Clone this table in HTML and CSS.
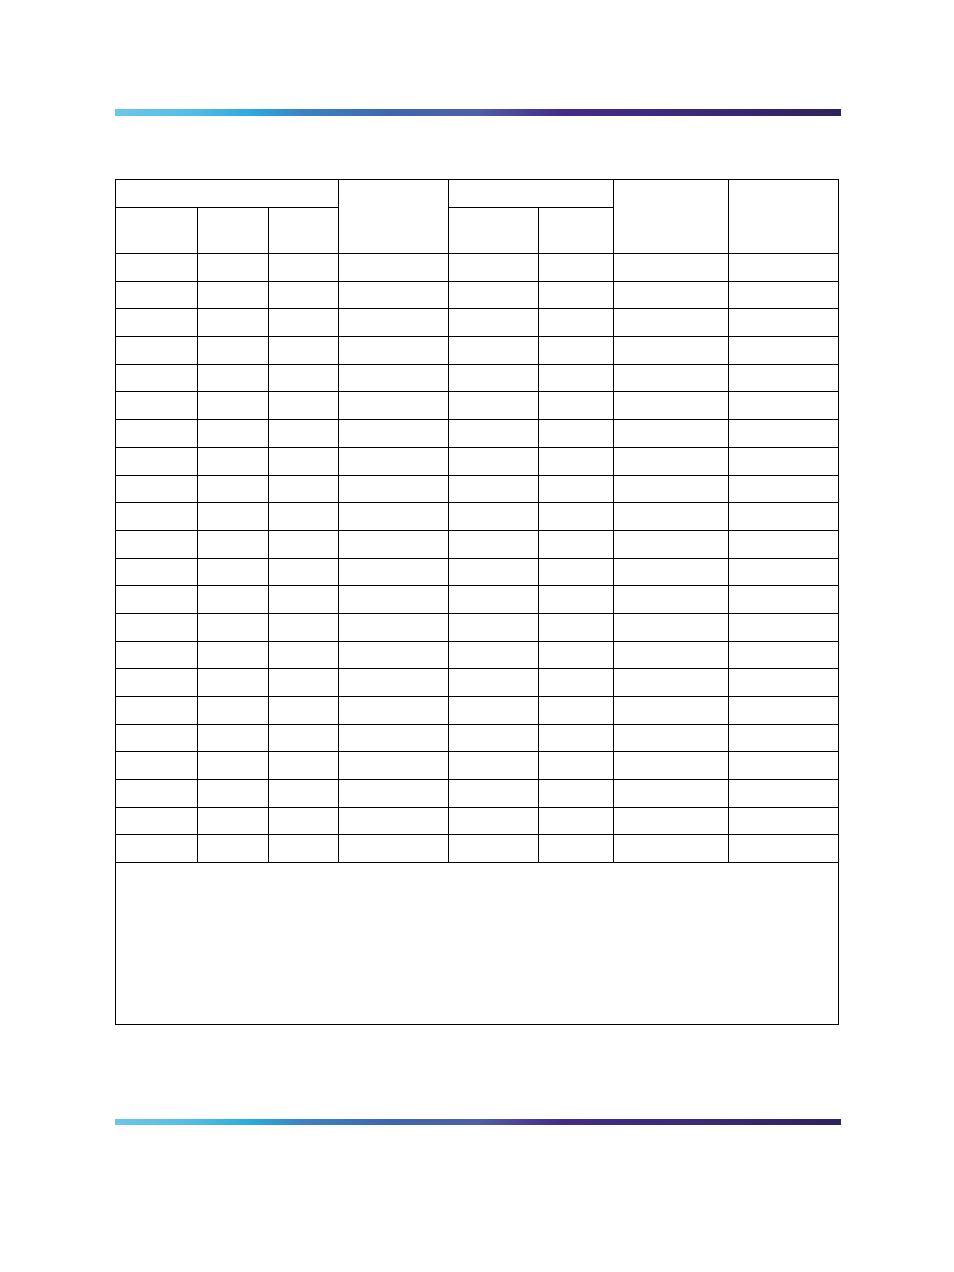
FILE: index.html
```html
<!DOCTYPE html>
<html>
<head>
<meta charset="utf-8">
<link rel="stylesheet" href="styles.css">
</head>
<body>
<div class="page">
  <div class="bar bar-top"></div>
  <table class="grid">
    <colgroup>
      <col class="c1"><col class="c2"><col class="c3"><col class="c4">
      <col class="c5"><col class="c6"><col class="c7"><col class="c8">
    </colgroup>
    <tr class="h1">
      <td colspan="3"></td>
      <td rowspan="2"></td>
      <td colspan="2"></td>
      <td rowspan="2"></td>
      <td rowspan="2"></td>
    </tr>
    <tr class="h2">
      <td></td><td></td><td></td>
      <td></td><td></td>
    </tr>
    <tr class="r"><td></td><td></td><td></td><td></td><td></td><td></td><td></td><td></td></tr>
    <tr class="r"><td></td><td></td><td></td><td></td><td></td><td></td><td></td><td></td></tr>
    <tr class="r"><td></td><td></td><td></td><td></td><td></td><td></td><td></td><td></td></tr>
    <tr class="r"><td></td><td></td><td></td><td></td><td></td><td></td><td></td><td></td></tr>
    <tr class="r"><td></td><td></td><td></td><td></td><td></td><td></td><td></td><td></td></tr>
    <tr class="r"><td></td><td></td><td></td><td></td><td></td><td></td><td></td><td></td></tr>
    <tr class="r"><td></td><td></td><td></td><td></td><td></td><td></td><td></td><td></td></tr>
    <tr class="r"><td></td><td></td><td></td><td></td><td></td><td></td><td></td><td></td></tr>
    <tr class="r"><td></td><td></td><td></td><td></td><td></td><td></td><td></td><td></td></tr>
    <tr class="r"><td></td><td></td><td></td><td></td><td></td><td></td><td></td><td></td></tr>
    <tr class="r"><td></td><td></td><td></td><td></td><td></td><td></td><td></td><td></td></tr>
    <tr class="r"><td></td><td></td><td></td><td></td><td></td><td></td><td></td><td></td></tr>
    <tr class="r"><td></td><td></td><td></td><td></td><td></td><td></td><td></td><td></td></tr>
    <tr class="r"><td></td><td></td><td></td><td></td><td></td><td></td><td></td><td></td></tr>
    <tr class="r"><td></td><td></td><td></td><td></td><td></td><td></td><td></td><td></td></tr>
    <tr class="r"><td></td><td></td><td></td><td></td><td></td><td></td><td></td><td></td></tr>
    <tr class="r"><td></td><td></td><td></td><td></td><td></td><td></td><td></td><td></td></tr>
    <tr class="r"><td></td><td></td><td></td><td></td><td></td><td></td><td></td><td></td></tr>
    <tr class="r"><td></td><td></td><td></td><td></td><td></td><td></td><td></td><td></td></tr>
    <tr class="r"><td></td><td></td><td></td><td></td><td></td><td></td><td></td><td></td></tr>
    <tr class="r"><td></td><td></td><td></td><td></td><td></td><td></td><td></td><td></td></tr>
    <tr class="r"><td></td><td></td><td></td><td></td><td></td><td></td><td></td><td></td></tr>
    <tr class="foot"><td colspan="8"></td></tr>
  </table>
  <div class="bar bar-bottom"></div>
</div>
</body>
</html>
```

FILE: styles.css
```css
html, body {
  margin: 0;
  padding: 0;
  background: #ffffff;
  font-family: "Liberation Sans", Arial, sans-serif;
}

.page {
  width: 954px;
  height: 1272px;
  box-sizing: border-box;
  padding: 109px 0 0 115px;
}

.bar {
  width: 726px;
  background: linear-gradient(to right,
    #6cc6ea 0%,
    #55bde9 10%,
    #2aa9de 19%,
    #3b82c4 26%,
    #3e66ae 38%,
    #4f5ea9 50%,
    #4a3d96 57%,
    #432a88 62%,
    #3c2a7c 78%,
    #30215f 100%);
}

.bar-top {
  height: 7px;
  margin-bottom: 63px;
}

.bar-bottom {
  height: 6px;
  margin-top: 94px;
}

.grid {
  border-collapse: collapse;
  table-layout: fixed;
  width: 724px;
}

.grid td {
  border: 1px solid #000000;
  padding: 0;
}

.c1 { width: 82px; }
.c2 { width: 71px; }
.c3 { width: 70px; }
.c4 { width: 110px; }
.c5 { width: 90px; }
.c6 { width: 75px; }
.c7 { width: 115px; }
.c8 { width: 110px; }

.h1 { height: 28px; }
.h2 { height: 46px; }
.r { height: 27.7px; }
.foot { height: 162px; }
```
